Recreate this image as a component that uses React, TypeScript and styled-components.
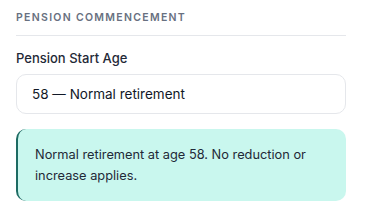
import React from "react";
import styled, { createGlobalStyle } from "styled-components";

const Global = createGlobalStyle`
  html, body { margin: 0; padding: 0; background: #ffffff; }
  body { font-family: Inter, "Noto Sans", sans-serif; -webkit-font-smoothing: antialiased; }
`;

const Section = styled.section`
  width: 330px;
  padding: 0 19px 0 16px;
  display: flex;
  flex-direction: column;
`;

const Heading = styled.h3`
  margin: 0;
  padding: 11px 0 10px;
  font-size: 10.5px;
  font-weight: 600;
  letter-spacing: 1.3px;
  text-transform: uppercase;
  color: #687080;
  border-bottom: 1px solid #e5e7eb;
  line-height: 14px;
`;

const Field = styled.div`
  display: flex;
  flex-direction: column;
  gap: 8px;
  margin-top: 14px;
`;

const Label = styled.label`
  font-size: 13px;
  font-weight: 500;
  color: #1f2937;
  line-height: 16px;
`;

const Select = styled.div`
  height: 40px;
  box-sizing: border-box;
  border: 1px solid #e5e7eb;
  border-radius: 10px;
  padding: 0 15px;
  display: flex;
  align-items: center;
  font-size: 13.5px;
  color: #111827;
  background: #ffffff;
`;

const Info = styled.div`
  margin-top: 15px;
  box-sizing: border-box;
  min-height: 72px;
  background: #c9f7ee;
  border-left: 2px solid #1d6b63;
  border-radius: 10px;
  padding: 10px 17px;
  font-size: 12.8px;
  line-height: 21px;
  color: #1f2937;
  display: flex;
  align-items: center;
`;

export default function App() {
  return (
    <>
      <Global />
      <Section>
        <Heading>Pension Commencement</Heading>
        <Field>
          <Label>Pension Start Age</Label>
          <Select>58 — Normal retirement</Select>
        </Field>
        <Info>Normal retirement at age 58. No reduction or increase applies.</Info>
      </Section>
    </>
  );
}
